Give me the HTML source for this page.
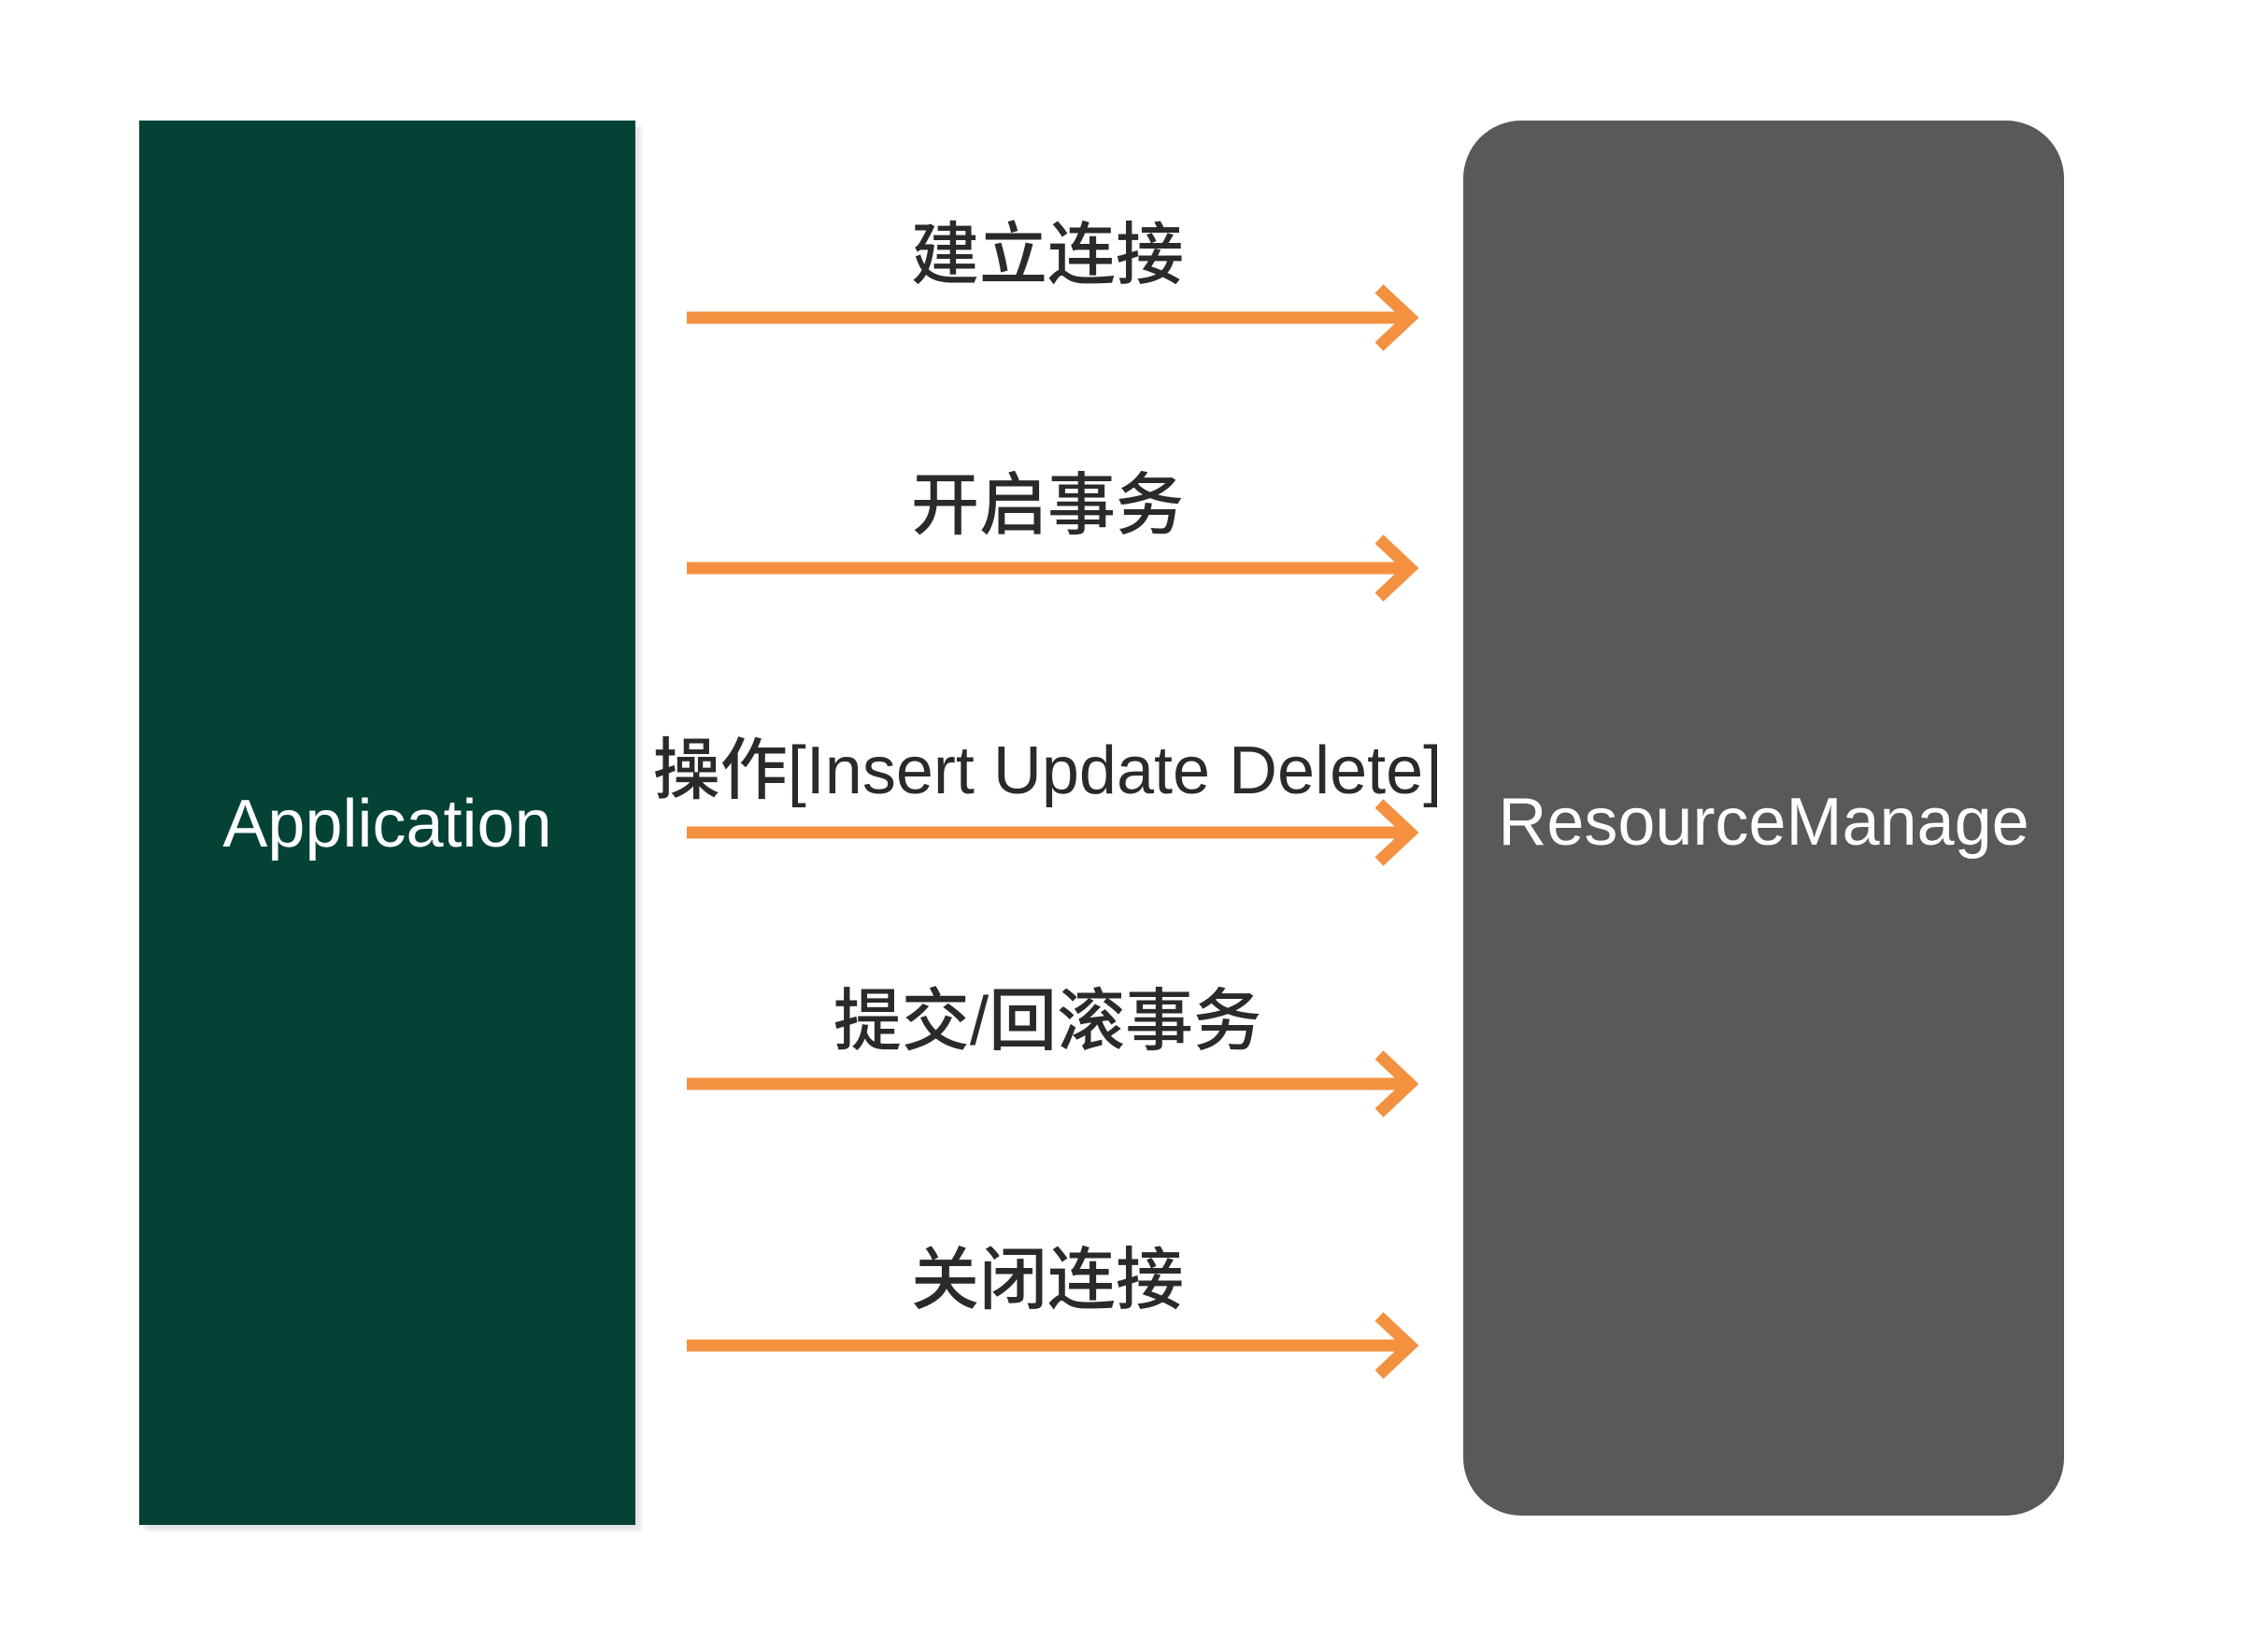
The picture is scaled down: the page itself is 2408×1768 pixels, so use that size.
<!DOCTYPE html>
<html><head><meta charset="utf-8"><style>
html,body{margin:0;padding:0;background:#fff;}
body{width:2408px;height:1768px;position:relative;overflow:hidden;font-family:"Liberation Sans","Noto Sans CJK SC",sans-serif;}
.g{position:absolute;left:149px;top:129px;width:531px;height:1503px;background:#044236;box-shadow:6px 6px 4px #e6e6e6;}
.r{position:absolute;left:1566px;top:129px;width:643px;height:1493px;background:#5a5859;border-radius:62px;}
.t{position:absolute;color:#fff;font-size:72px;text-align:center;transform:translateY(-50%);}
.l{position:absolute;left:606px;width:1030px;text-align:center;font-size:73px;color:#2a2a2a;transform:translateY(-50%);line-height:1;font-weight:500;}
</style></head><body>
<div class="g"></div>
<div class="r"></div>
<div class="t" style="left:149px;width:531px;top:882px;">Application</div>
<div class="t" style="left:1566px;width:643px;top:880px;">ResourceManage</div>
<div class="l" style="top:273px">建立连接</div>
<div class="l" style="top:541px">开启事务</div>
<div class="l" style="top:825px;font-size:72px">操作[Insert Update Delete]</div>
<div class="l" style="top:1093px">提交/回滚事务</div>
<div class="l" style="top:1370px">关闭连接</div>
<svg width="2408" height="1768" style="position:absolute;left:0;top:0" fill="none" stroke="#f39140" stroke-width="13">
<g id="a"><path d="M735 340H1509"/><path d="M1476 309L1509 340L1476 371"/></g>
<use href="#a" y="268"/><use href="#a" y="551"/><use href="#a" y="820"/><use href="#a" y="1100"/>
</svg>
</body></html>
